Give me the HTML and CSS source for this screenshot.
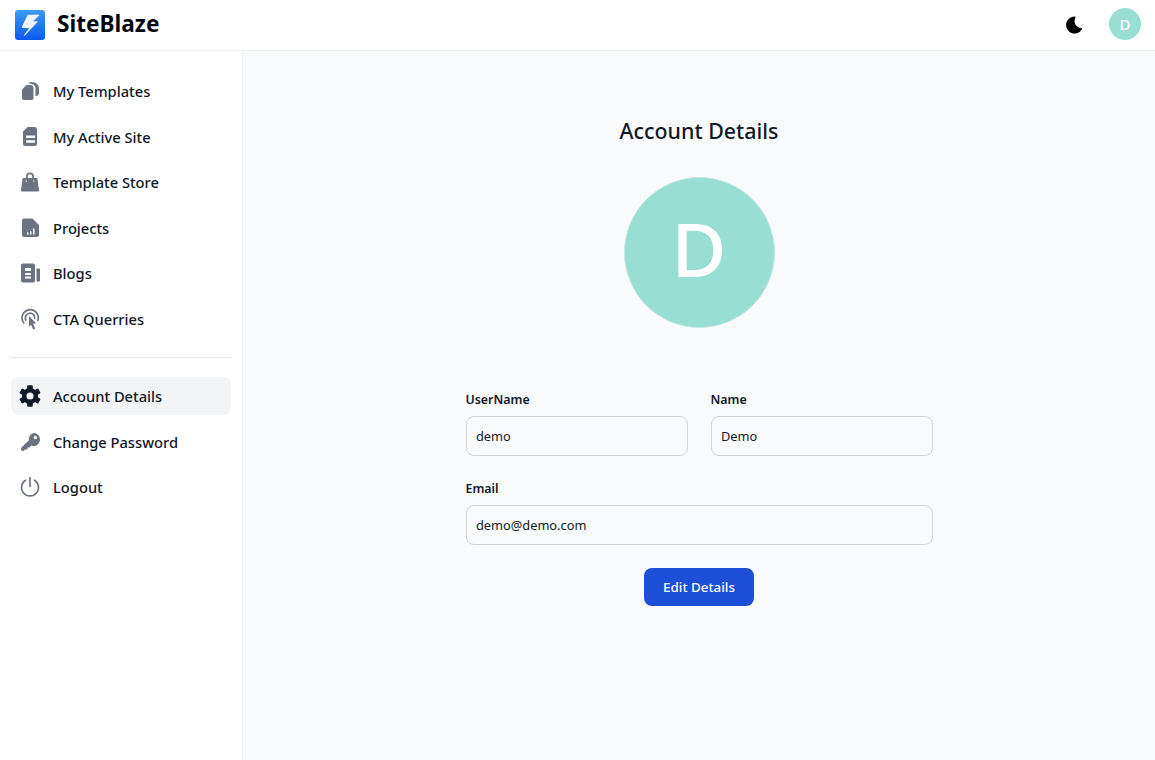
FILE: index.html
```html
<!DOCTYPE html>
<html>
    <head>
        <title>SiteBlaze</title>
        <link rel="stylesheet" href="styles.css">
    </head>
    <body>
        <header class="topBar">
            <div class="brand">
                <svg class="brandLogo" viewBox="0 0 30 30">
                    <defs>
                        <linearGradient id="logoFill" x1="0" y1="0" x2="0" y2="1">
                            <stop offset="0" stop-color="#3f9bf5"/>
                            <stop offset="1" stop-color="#0a58ee"/>
                        </linearGradient>
                    </defs>
                    <rect width="30" height="30" rx="3" fill="url(#logoFill)"/>
                    <path d="M13.500 4.700H23.500Q24.800 4.700 24 5.800L18 11.300H22Q23 11.500 22.300 12.300L9.800 25.500Q8.700 26.500 9 25L14.300 18H7.500Q6.300 18 6.800 16.900L12.300 5.500Q12.700 4.700 13.500 4.700Z" fill="#eef5ff"/>
                </svg>
                <span class="brandName">SiteBlaze</span>
            </div>
            <div class="topActions">
                <svg class="moonIcon" viewBox="0 0 20 20">
                    <path d="M17.800 13.750a1 1 0 0 0-.859-.5A7.488 7.488 0 0 1 10.520 2a1 1 0 0 0 0-.969A1.035 1.035 0 0 0 9.687.5h-.113a9.500 9.500 0 1 0 8.222 14.247 1 1 0 0 0 .004-.997Z" fill="#000"/>
                </svg>
                <div class="avatarSmall">D</div>
            </div>
        </header>

        <div class="pageBody">
            <nav class="sideBar">
                <ul class="navList">
                    <li class="navItem">
                        <svg class="navIcon" viewBox="0 0 22 22"><path d="M7.500 5H12a3 3 0 0 1 2.500 2.500V18a2 2 0 0 1-2 2H5a2 2 0 0 1-2-2V9.500z"/><path d="M9 3.500C10 2.500 11.500 2 13 2c4 0 7 3 7 6.500V13a3 3 0 0 1-3.500 3V8c0-2.500-3-4.500-7.500-4.500z"/></svg>
                        <span>My Templates</span>
                    </li>
                    <li class="navItem">
                        <svg class="navIcon" viewBox="0 0 22 22"><path fill-rule="evenodd" d="M8.500 1H15.500A2.500 2.500 0 0 1 18 3.500v14a2.500 2.500 0 0 1-2.500 2.500h-9A2.500 2.500 0 0 1 4 17.500V5.500zM7 9.500V12h9V9.500zM7 14.200v2.500h9v-2.500z"/></svg>
                        <span>My Active Site</span>
                    </li>
                    <li class="navItem">
                        <svg class="navIcon" viewBox="0 0 22 22"><path fill-rule="evenodd" d="M7 7V5.500a4 4 0 0 1 8 0V7h2.500a1 1 0 0 1 1 .9l1.500 11.600a1 1 0 0 1-1 1.100H3a1 1 0 0 1-1-1.100L3.500 7.900a1 1 0 0 1 1-.9zM8.800 7h4.400V5.500a2.200 2.200 0 0 0-4.400 0zM6.500 10a.7.7 0 1 0 1.400 0 .7.7 0 0 0-1.400 0zM14.100 10a.7.7 0 1 0 1.400 0 .7.7 0 0 0-1.400 0z"/></svg>
                        <span>Template Store</span>
                    </li>
                    <li class="navItem">
                        <svg class="navIcon" viewBox="0 0 22 22"><path fill-rule="evenodd" d="M5 1.500H13.500L20 8V18a2 2 0 0 1-2 2H5a2 2 0 0 1-2-2V3.500a2 2 0 0 1 2-2zM8 15.500v2h1.500v-2zM11 14v3.500h1.500V14zM14 11.500v6h1.500v-6z"/></svg>
                        <span>Projects</span>
                    </li>
                    <li class="navItem">
                        <svg class="navIcon" viewBox="0 0 22 22"><path fill-rule="evenodd" d="M4 1.500h10a2 2 0 0 1 2 2v15a2 2 0 0 1-2 2H4a2 2 0 0 1-2-2v-15a2 2 0 0 1 2-2zM6 6v3h6V6zM6 11v2h6v-2zM6 14.500v2h6v-2z"/><path d="M17.500 6.500H20a1 1 0 0 1 1 1V17a1.500 1.500 0 0 1-3.500 1.500z"/></svg>
                        <span>Blogs</span>
                    </li>
                    <li class="navItem">
                        <svg class="navIcon" viewBox="0 0 22 22"><path d="M5.200 15.500A8.200 8.200 0 1 1 18.800 13" fill="none" stroke="#6b7280" stroke-width="1.700"/><path d="M7.300 12.700A4.700 4.700 0 1 1 15.600 11" fill="none" stroke="#6b7280" stroke-width="1.700"/><path d="M10 8 17 15.200l-3 .6 2.200 4.700-2 1-2.200-4.700-2 2z"/></svg>
                        <span>CTA Querries</span>
                    </li>
                </ul>
                <ul class="navList navSecond">
                    <li class="navItem navActive">
                        <svg class="navIcon" viewBox="0 0 22 22">
                            <circle cx="11" cy="11" r="5.800" fill="none" stroke="#111827" stroke-width="4.500"/>
                            <rect x="8.200" y="0.200" width="5.600" height="5" rx="1"/>
                            <rect x="8.200" y="0.200" width="5.600" height="5" rx="1" transform="rotate(60 11 11)"/>
                            <rect x="8.200" y="0.200" width="5.600" height="5" rx="1" transform="rotate(120 11 11)"/>
                            <rect x="8.200" y="0.200" width="5.600" height="5" rx="1" transform="rotate(180 11 11)"/>
                            <rect x="8.200" y="0.200" width="5.600" height="5" rx="1" transform="rotate(240 11 11)"/>
                            <rect x="8.200" y="0.200" width="5.600" height="5" rx="1" transform="rotate(300 11 11)"/>
                        </svg>
                        <span>Account Details</span>
                    </li>
                    <li class="navItem">
                        <svg class="navIcon" viewBox="0 0 22 22"><path fill-rule="evenodd" d="M14.500 2a6.500 6.500 0 1 1-2.200 12.600l-1.800 1.900H8.500v2H6l-1 1a1.800 1.800 0 0 1-3-1.600v-.8l7.900-7.800A6.500 6.500 0 0 1 14.500 2zM16.300 4.800a1.700 1.700 0 1 0 0 3.400 1.700 1.700 0 0 0 0-3.400z"/></svg>
                        <span>Change Password</span>
                    </li>
                    <li class="navItem">
                        <svg class="navIcon" viewBox="0 0 22 22"><path d="M11 1.500v9M6.500 4.200a8.500 8.500 0 1 0 9 0" fill="none" stroke="#6b7280" stroke-width="1.600" stroke-linecap="round"/></svg>
                        <span>Logout</span>
                    </li>
                </ul>
            </nav>

            <main class="mainArea">
                <h1 class="pageTitle">Account Details</h1>
                <div class="avatarLarge">D</div>
                <form class="detailsForm">
                    <div class="formRow">
                        <div class="field">
                            <label>UserName</label>
                            <input class="textBox" type="text" value="demo">
                        </div>
                        <div class="field">
                            <label>Name</label>
                            <input class="textBox" type="text" value="Demo">
                        </div>
                    </div>
                    <div class="field">
                        <label>Email</label>
                        <input class="textBox" type="text" value="demo@demo.com">
                    </div>
                    <button class="editButton" type="button">Edit Details</button>
                </form>
            </main>
        </div>
    </body>
</html>
```
FILE: styles.css
```css
* {
 box-sizing: border-box;
}
html, body {
 height: 100%;
}
body {
 margin: 0;
 display: flex;
 flex-direction: column;
 font-family: "Noto Sans", "Open Sans", sans-serif;
 color: #111827;
 background-color: #fff;
 overflow: hidden;
}

.topBar {
 height: 51px;
 flex: none;
 display: flex;
 align-items: center;
 justify-content: space-between;
 padding: 0 14px 2px 15px;
 border-bottom: 1px solid #f0f1f3;
}
.brand {
 display: flex;
 align-items: center;
 gap: 12px;
}
.brandLogo {
 width: 30px;
 height: 30px;
 margin-top: 1px;
}
.brandName {
 font-size: 22.6px;
 font-weight: 700;
 line-height: 28px;
 margin-bottom: 1px;
 color: #030712;
}
.topActions {
 display: flex;
 align-items: center;
 gap: 25px;
}
.moonIcon {
 width: 18px;
 height: 18px;
 margin-top: 2px;
}
.avatarSmall {
 width: 32px;
 height: 32px;
 border-radius: 50%;
 background-color: #98ded3;
 color: #fff;
 display: flex;
 align-items: center;
 justify-content: center;
 font-size: 15px;
 font-weight: 500;
}

.pageBody {
 flex: 1;
 display: flex;
 min-height: 0;
}
.sideBar {
 width: 243px;
 flex: none;
 padding: 21.4px 11px 0 11px;
 border-right: 1px solid #f0f1f3;
}
.navList {
 list-style: none;
 margin: 0;
 padding: 0;
 display: flex;
 flex-direction: column;
 gap: 7.5px;
}
.navSecond {
 margin-top: 19.4px;
 padding-top: 19px;
 border-top: 1px solid #e5e7eb;
}
.navItem {
 height: 38px;
 display: flex;
 align-items: center;
 gap: 12px;
 padding: 0 8px;
 border-radius: 8px;
 font-size: 14.7px;
 font-weight: 500;
}
.navIcon {
 width: 22px;
 height: 22px;
 fill: #6b7280;
}
.navActive {
 background-color: #f3f4f6;
}
.navActive .navIcon {
 fill: #111827;
}

.mainArea {
 flex: 1;
 background-color: #f9fafb;
 display: flex;
 flex-direction: column;
 align-items: center;
 padding-top: 64px;
}
.pageTitle {
 margin: 0;
 font-size: 21.4px;
 font-weight: 500;
 line-height: 32px;
}
.avatarLarge {
 width: 151px;
 height: 151px;
 margin-top: 30px;
 padding-bottom: 10px;
 border-radius: 50%;
 background-color: #98ded3;
 border: 1px solid #c4e8e2;
 color: #fff;
 display: flex;
 align-items: center;
 justify-content: center;
 font-size: 75px;
 font-weight: 500;
}
.detailsForm {
 width: 467px;
 margin-top: 63px;
 display: flex;
 flex-direction: column;
}
.formRow {
 display: grid;
 grid-template-columns: 1fr 1fr;
 gap: 23px;
 margin-bottom: 24px;
}
.field {
 display: flex;
 flex-direction: column;
 gap: 7px;
}
.field label {
 font-size: 12.4px;
 font-weight: 600;
 line-height: 18px;
}
.textBox {
 height: 40px;
 width: 100%;
 padding: 0 9.5px;
 border: 1px solid #d1d5db;
 border-radius: 8px;
 background-color: #f9fafb;
 color: #111827;
 font-family: inherit;
 font-size: 12.8px;
}
.editButton {
 width: 110px;
 height: 38px;
 margin-top: 23px;
 align-self: center;
 border: none;
 border-radius: 8px;
 background-color: #1d4ed8;
 color: #fff;
 font-family: inherit;
 font-size: 13.4px;
 font-weight: 500;
}
```
